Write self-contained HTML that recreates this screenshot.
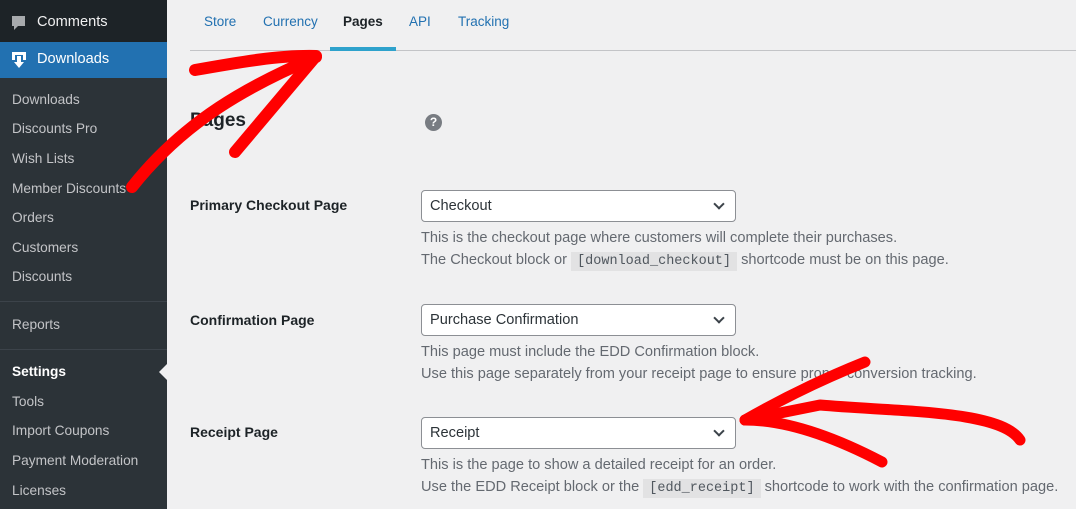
<!DOCTYPE html><html><head><style>
body{margin:0;width:1076px;height:509px;overflow:hidden;background:#f0f0f1;font-family:"Liberation Sans",sans-serif;position:relative}
.sb{position:absolute;left:0;top:0;width:167px;height:509px;background:#2c3338}
.top{position:absolute;left:0;top:0;width:167px;height:42px;background:#1d2327;color:#f0f0f1;font-size:14.6px}
.dl{position:absolute;left:0;top:42px;width:167px;height:36px;background:#2271b1;color:#fff;font-size:14.6px}
.it{position:absolute;left:12px;font-size:13.7px;color:#c3c4c7}
.tab{position:absolute;top:14px;font-size:13.5px;color:#2271b1}
.lbl{position:absolute;left:190px;font-size:14px;font-weight:bold;color:#1d2327}
.sel{position:absolute;left:421px;width:313px;height:30px;border:1px solid #8c8f94;border-radius:4px;background:#fff;font-size:14.6px;color:#2c3338;line-height:30px;text-indent:8px}
.sel:after{content:"";position:absolute;right:12px;top:9px;width:6px;height:6px;border-right:2px solid #3c434a;border-bottom:2px solid #3c434a;transform:rotate(45deg)}
.d{position:absolute;left:421px;font-size:14.6px;color:#646970;white-space:nowrap}
code{font-family:"Liberation Mono",monospace;background:#e2e2e3;color:#50575e;padding:2px 6px;font-size:13.5px}
</style></head><body>
<div class="sb"></div>
<div class="top"><svg style="position:absolute;left:11px;top:15px" width="15" height="16"><path d="M1 1h13v10H7l-4 4v-4H1z" fill="#a7aaad"/></svg><span style="position:absolute;left:37px;top:14px">Comments</span></div>
<div class="dl"><svg style="position:absolute;left:11px;top:9px" width="16" height="18"><path d="M1 1h14v8h-3V4H4v5H1z M6 5h4v6h3l-5 6-5-6h3z" fill="#fff"/></svg><span style="position:absolute;left:37px;top:9px">Downloads</span></div>
<div class="it" style="top:92px">Downloads</div>
<div class="it" style="top:121px">Discounts Pro</div>
<div class="it" style="top:151px">Wish Lists</div>
<div class="it" style="top:181px">Member Discounts</div>
<div class="it" style="top:210px">Orders</div>
<div class="it" style="top:240px">Customers</div>
<div class="it" style="top:269px">Discounts</div>
<div style="position:absolute;left:0;top:301px;width:167px;height:1px;background:#3c434a"></div>
<div class="it" style="top:317px">Reports</div>
<div style="position:absolute;left:0;top:349px;width:167px;height:1px;background:#3c434a"></div>
<div class="it" style="top:364px;color:#fff;font-weight:bold">Settings</div>
<div style="position:absolute;left:159px;top:364px;border:8px solid transparent;border-right-color:#f0f0f1;border-left:0"></div>
<div class="it" style="top:394px">Tools</div>
<div class="it" style="top:423px">Import Coupons</div>
<div class="it" style="top:453px">Payment Moderation</div>
<div class="it" style="top:483px">Licenses</div>
<div style="position:absolute;left:190px;top:0;width:886px;height:50px;border-bottom:1px solid #c3c4c7"></div>
<div class="tab" style="left:204px">Store</div>
<div class="tab" style="left:263px">Currency</div>
<div class="tab" style="left:343px;color:#1d2327;font-weight:bold">Pages</div>
<div style="position:absolute;left:330px;top:47px;width:66px;height:4px;background:#2ea2cc"></div>
<div class="tab" style="left:409px">API</div>
<div class="tab" style="left:458px">Tracking</div>
<div style="position:absolute;left:190px;top:110px;font-size:19px;font-weight:bold;color:#1d2327">Pages</div>
<div style="position:absolute;left:425px;top:114px;width:17px;height:17px;border-radius:50%;background:#787c82;color:#fff;font-size:12px;font-weight:bold;text-align:center;line-height:17px">?</div>
<div class="lbl" style="top:197px">Primary Checkout Page</div>
<div class="sel" style="top:190px">Checkout</div>
<div class="d" style="top:230px">This is the checkout page where customers will complete their purchases.</div>
<div class="d" style="top:252px">The Checkout block or <code>[download_checkout]</code> shortcode must be on this page.</div>
<div class="lbl" style="top:312px">Confirmation Page</div>
<div class="sel" style="top:304px">Purchase Confirmation</div>
<div class="d" style="top:344px">This page must include the EDD Confirmation block.</div>
<div class="d" style="top:366px">Use this page separately from your receipt page to ensure proper conversion tracking.</div>
<div class="lbl" style="top:424px">Receipt Page</div>
<div class="sel" style="top:417px">Receipt</div>
<div class="d" style="top:457px">This is the page to show a detailed receipt for an order.</div>
<div class="d" style="top:479px">Use the EDD Receipt block or the <code>[edd_receipt]</code> shortcode to work with the confirmation page.</div>
<svg style="position:absolute;left:0;top:0" width="1076" height="509" fill="none" stroke="#f00" stroke-linecap="round" stroke-linejoin="round">
<path d="M132 187C185 120 250 85 316 57" stroke-width="12"/>
<path d="M195 70C240 62 280 55 316 56L235 152" stroke-width="12"/>
<path d="M1020 440C1000 410 900 412 820 405L745 420" stroke-width="11"/>
<path d="M865 362C820 380 780 400 745 420C790 420 840 440 882 462" stroke-width="11"/>
</svg>
</body></html>
